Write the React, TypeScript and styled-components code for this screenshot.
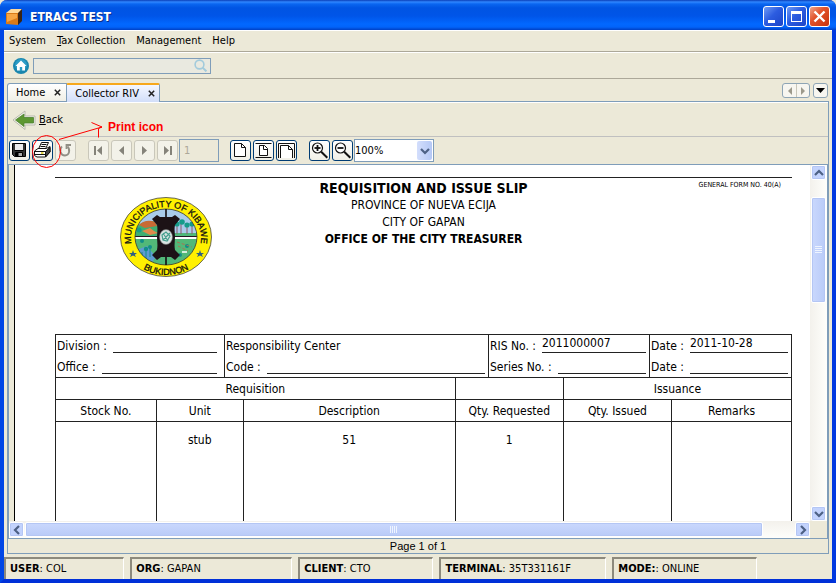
import React from "react";
import styled, { createGlobalStyle, css } from "styled-components";

const UI = '"DejaVu Sans Condensed", "DejaVu Sans", sans-serif';
const BEIGE = "#ece9d8";
const LINE = "#7f9db9";
const INK = "#222";

const Global = createGlobalStyle`
  * { box-sizing: border-box; }
  html, body { margin: 0; padding: 0; background: ${BEIGE}; }
  body, button, input, select { font-family: ${UI}; font-size: 11px; color: #000; }
  button { padding: 0; margin: 0; }
`;

const Window = styled.div`
  display: flex;
  flex-direction: column;
  height: 100vh;
  min-height: 400px;
  border: solid #0046e6;
  border-width: 0 4px 4px;
  border-color: #0046e6 #0038e0 #0030d8 #0046e6;
  border-radius: 7px 7px 0 0;
  background: ${BEIGE};
`;

const TitleBar = styled.header`
  display: flex;
  align-items: center;
  flex: none;
  gap: 2px;
  height: 30px;
  margin: 0 -4px;
  padding: 3px 6px 0;
  border-radius: 7px 7px 0 0;
  background: linear-gradient(#0a3fb8 0, #2f86ff 2px, #0a66f0 4px, #0054e3 8px, #0055e8 16px, #0268ff 24px, #0264fa 27px, #0040c4 30px);
`;

const AppTitle = styled.h1`
  flex: 1;
  margin: 0 0 0 6px;
  font-size: 12px;
  line-height: 16px;
  font-weight: 700;
  color: #fff;
  text-shadow: 1px 1px 0 #0a2f8a;
`;

const CaptionButton = styled.button<{ $close?: boolean }>`
  display: flex;
  width: 21px;
  height: 21px;
  border: 1px solid #fff;
  border-radius: 3px;
  background: ${(p) =>
    p.$close
      ? "linear-gradient(135deg, #f0a58c, #e2542c 40%, #c8330c)"
      : "linear-gradient(135deg, #6f9bf5, #2c5ce0 45%, #1c45c8)"};
`;

const MenuBar = styled.nav`
  display: flex;
  flex: none;
  align-items: center;
  gap: 11px;
  height: 22px;
  padding: 0 5px;
  border-top: 1px solid #fff;
  border-bottom: 1px solid #aca899;
`;

const MenuItem = styled.button`
  border: 0;
  background: none;
  line-height: 16px;
`;

const QuickBar = styled.div`
  display: flex;
  flex: none;
  align-items: center;
  gap: 4px;
  height: 27px;
  padding: 0 9px;
  border-top: 1px solid #fff;
  border-bottom: 1px solid #aca899;
`;

const PlainButton = styled.button`
  display: flex;
  border: 0;
  background: none;
`;

const SearchBox = styled.label`
  display: flex;
  align-items: center;
  width: 178px;
  height: 16px;
  padding-right: 3px;
  border: 1px solid ${LINE};
  background: #e9e9e0;
`;

const SearchInput = styled.input`
  flex: 1;
  min-width: 0;
  height: 14px;
  padding: 0 3px;
  border: 0;
  background: none;
`;

const TabStrip = styled.div`
  display: flex;
  flex: none;
  align-items: flex-end;
  height: 22px;
  padding: 0 4px 0 3px;
`;

const Tab = styled.div<{ $active?: boolean }>`
  display: flex;
  align-items: center;
  gap: 9px;
  height: 18px;
  padding: 0 5px 0 8px;
  border: 1px solid ${LINE};
  border-bottom: 0;
  border-radius: 3px 0 0 0;
  background: linear-gradient(#fff, #f0efe6);
  ${(p) =>
    p.$active &&
    css`
      height: 19px;
      margin: 0 0 -1px -1px;
      padding: 0 4px 0 8px;
      border-top: 2px solid #f7a81c;
      border-radius: 2px 2px 0 0;
      background: linear-gradient(#f4f7ff, #d2def9);
      position: relative;
      z-index: 1;
    `}
`;

const TabLabel = styled.button`
  border: 0;
  background: none;
  line-height: 14px;
  white-space: nowrap;
`;

const TabTools = styled.div`
  display: flex;
  gap: 3px;
  margin-left: auto;
  padding-bottom: 3px;
`;

const TabToolGroup = styled.div`
  display: flex;
  border: 1px solid #8ea5b5;
  border-radius: 3px;
  background: #f7f6f0;
`;

const TabTool = styled.button`
  display: flex;
  align-items: center;
  justify-content: center;
  width: 13px;
  height: 13px;
  border: 0;
  background: none;
  & + & { border-left: 1px solid #c9c7ba; }
`;

const Panel = styled.main`
  position: relative;
  display: flex;
  flex: 1;
  flex-direction: column;
  min-height: 0;
  margin: 0 3px 3px;
  border: 1px solid ${LINE};
`;

const BackBar = styled.div`
  display: flex;
  flex: none;
  align-items: center;
  height: 35px;
  padding: 0 4px;
  border-top: 1px solid #fff;
  border-bottom: 1px solid #c0c0c0;
`;

const BackButton = styled(PlainButton)`
  align-items: center;
  gap: 2px;
  line-height: 16px;
`;

const ReportBar = styled.div`
  display: flex;
  flex: none;
  align-items: center;
  height: 27px;
  padding: 0 1px;
`;

const ToolGroup = styled.div<{ $after?: number }>`
  display: flex;
  align-items: center;
  gap: 2px;
  margin-right: ${(p) => p.$after ?? 0}px;
`;

const ToolButton = styled.button`
  display: flex;
  align-items: center;
  justify-content: center;
  width: 21px;
  height: 21px;
  border: 1px solid #003c74;
  border-radius: 3px;
  background: linear-gradient(#fff, #f0efe6);
  &:disabled {
    border-color: #c9c7ba;
    background: #f3f2e9;
  }
`;

const PageInput = styled.input`
  width: 40px;
  height: 23px;
  padding: 0 4px;
  border: 1px solid ${LINE};
  background: ${BEIGE};
  &:disabled { color: #aca899; }
`;

const ZoomBox = styled.div`
  display: flex;
  align-items: center;
  width: 80px;
  height: 23px;
  margin-left: -1px;
  padding-right: 1px;
  border: 1px solid ${LINE};
  background: #fff;
`;

const ZoomSelect = styled.select`
  flex: 1;
  min-width: 0;
  height: 20px;
  padding: 0;
  border: 0;
  background: none;
  appearance: none;
`;

const Arrow = styled.span`
  display: flex;
  align-items: center;
  justify-content: center;
  width: 15px;
  height: 19px;
  border-radius: 2px;
  background: linear-gradient(90deg, #d3defc, #b5c8f5);
  pointer-events: none;
`;

const ScrollPane = styled.section`
  display: grid;
  flex: 1;
  grid-template: minmax(0, 1fr) 17px / minmax(0, 1fr) 17px;
  min-height: 0;
  border: 1px solid ${LINE};
`;

const Viewport = styled.div`
  min-width: 0;
  overflow: hidden;
  padding-left: 5px;
`;

const Sheet = styled.article`
  height: 100%;
  padding: 12px 18px 0 40px;
  border-left: 1px solid #000;
  background: #fff;
  font-size: 12px;
  overflow: hidden;
`;

const SheetHead = styled.header`
  display: grid;
  grid-template-columns: 1fr auto 1fr;
  align-items: start;
  height: 157px;
  border-top: 1px solid ${INK};
`;

const SealBox = styled.div`
  padding: 19px 0 0 65px;
`;

const Heading = styled.div`
  padding-top: 2px;
  text-align: center;
  line-height: 17px;
`;

const SlipTitle = styled.h2`
  margin: 0;
  font-size: 14px;
  line-height: 17px;
`;

const Strong = styled.strong`
  display: block;
`;

const Centered = styled.div`
  line-height: 17px;
`;

const FormNo = styled.small`
  padding: 2px 11px 0 0;
  font-size: 7px;
  line-height: 10px;
  text-align: right;
`;

const InfoGrid = styled.div`
  display: grid;
  grid-template-columns: 168fr 264fr 161fr 142fr;
  border: 1px solid ${INK};
  border-bottom: 0;
`;

const InfoCell = styled.div`
  min-width: 0;
  padding: 0 3px 0 1px;
  & + & { border-left: 1px solid ${INK}; }
  &:first-child { padding-right: 7px; }
`;

const Field = styled.div`
  display: flex;
  gap: 6px;
  height: 21px;
  line-height: 22px;
  white-space: nowrap;
`;

const Blank = styled.span`
  flex: 1;
  height: 18px;
  line-height: 16px;
  border-bottom: 1px solid ${INK};
`;

const Table = styled.table`
  width: 100%;
  table-layout: fixed;
  border-collapse: collapse;
`;

const Col = styled.col<{ $w: number }>`
  width: ${(p) => p.$w}%;
`;

const Th = styled.th`
  height: 22px;
  padding: 0;
  border: 1px solid ${INK};
  font-weight: 400;
  line-height: 16px;
`;

const Td = styled.td`
  height: 900px;
  padding: 10px 0 0;
  border: 1px solid ${INK};
  text-align: center;
  vertical-align: top;
  line-height: 16px;
`;

const ScrollTrack = styled.div<{ $v?: boolean }>`
  display: flex;
  flex-direction: ${(p) => (p.$v ? "column" : "row")};
  padding: ${(p) => (p.$v ? "0 1px" : "1px 0")};
  background: linear-gradient(${(p) => (p.$v ? "90deg" : "180deg")}, #f3f1ec, #fefefb);
`;

const scrollFace = css`
  display: flex;
  align-items: center;
  justify-content: center;
  border: 1px solid #fff;
  border-radius: 2px;
  box-shadow: 0 0 0 1px #b4c6f4 inset;
`;

const ScrollButton = styled.button`
  ${scrollFace}
  flex: none;
  width: 15px;
  height: 15px;
  background: #c3d3fd;
`;

const ScrollGap = styled.div<{ $size: number }>`
  flex: ${(p) => p.$size} 1 0;
`;

const Thumb = styled.div<{ $size: number; $v?: boolean }>`
  ${scrollFace}
  flex: ${(p) => p.$size} 1 0;
  background: linear-gradient(${(p) => (p.$v ? "90deg" : "180deg")}, #cad8fd, #b9cbf8);
`;

const PageStatus = styled.footer`
  flex: none;
  height: 14px;
  font-family: "Liberation Sans", Arial, sans-serif;
  font-size: 11px;
  line-height: 15px;
  text-align: center;
`;

const StatusBar = styled.footer`
  display: flex;
  flex: none;
  gap: 6px;
  height: 22px;
`;

const StatusCell = styled.div<{ $size: number }>`
  flex: ${(p) => p.$size} 1 0;
  min-width: 0;
  padding-left: 4px;
  border: solid #fff;
  border-width: 2px 1px 0 2px;
  border-top-color: #8d8a7d;
  border-left-color: #8d8a7d;
  line-height: 19px;
  white-space: nowrap;
`;

const StatusRest = styled.div`
  flex: 69 1 0;
`;

const Note = styled.div`
  position: absolute;
  top: 19px;
  left: 24px;
  display: flex;
  align-items: flex-start;
  pointer-events: none;
`;

const NoteText = styled.strong`
  margin-left: 4px;
  font: 700 12px/12px "Liberation Sans", Arial, sans-serif;
  color: #f00;
`;

const AppIcon = () => (
  <svg width="16" height="16" viewBox="0 0 16 16" aria-hidden="true">
    <path d="M0 4L5 0H16L12 5H0Z" fill="#ffd99a" />
    <path d="M0 4H12V16L0 15Z" fill="#d97a18" />
    <path d="M12 4L16 0V12L12 16Z" fill="#3a2415" />
    <path d="M1 5H11V9L1 13Z" fill="#f6a544" />
  </svg>
);

const HomeIcon = () => (
  <svg width="16" height="16" viewBox="0 0 16 16" aria-hidden="true">
    <circle cx="8" cy="8" r="8" fill="#1a86ae" />
    <circle cx="8" cy="7" r="6" fill="#2c9cc6" />
    <path d="M8 2.5L2.5 8H4V12.5H6.8V9H9.2V12.5H12V8H13.5Z" fill="#fff" />
  </svg>
);

const CloseX = () => (
  <svg width="7" height="7" viewBox="0 0 7 7" aria-hidden="true">
    <path d="M.8 .8L6.2 6.2M6.2 .8L.8 6.2" stroke="#222" strokeWidth="1.5" />
  </svg>
);

const Triangle = ({ d, w = 5, h = 8, c = "#9d9a8c" }: { d: string; w?: number; h?: number; c?: string }) => (
  <svg width={w} height={h} viewBox={`0 0 ${w} ${h}`} aria-hidden="true">
    <path d={d} fill={c} />
  </svg>
);

const Chevron = ({ d }: { d: string }) => (
  <svg width="10" height="10" viewBox="0 0 10 10" aria-hidden="true">
    <path d={d} fill="none" stroke="#4d6185" strokeWidth="2.2" />
  </svg>
);
const DOWN = "M1 3L5 7L9 3";
const UP = "M1 7L5 3L9 7";
const LEFT = "M7 1L3 5L7 9";
const RIGHT = "M3 1L7 5L3 9";

const Icon = ({ children }: { children: React.ReactNode }) => (
  <svg width="19" height="19" viewBox="0 0 19 19" fill="none" stroke="#111" strokeWidth="1" aria-hidden="true">
    {children}
  </svg>
);

const SaveIcon = () => (
  <Icon>
    <path d="M2.5 2.5H15.5V15.5H4.5L2.5 13.5Z" fill="#333" stroke="#000" />
    <path d="M5 3H13V9H5Z" fill="#ececec" stroke="none" />
    <path d="M4.5 9.5H13.5M5.5 11.5H12.5V15.5H5.5Z" fill="#a9a9a9" stroke="#000" />
    <path d="M6 12H8.5V15.5H6Z" fill="#000" stroke="none" />
  </Icon>
);

const PrintIcon = () => (
  <Icon>
    <path d="M5.5 8L8.5 1.5H15.5L12.5 8" fill="#fff" />
    <path d="M8.5 3.5H13.5M7.5 5.5H12.5" />
    <path d="M1.5 10L5 7.5H13.5L17 5.5V11L12.5 16H4L1.5 14.5Z" fill="#fff" />
    <path d="M1.5 10.5H12.5L17 6.5M1.5 13.5H12.5M12.5 10.5V16" />
    <path d="M12.5 10.5L17 6.5V11L12.5 16Z" fill="#444" />
    <path d="M8 12H10.5" stroke="#d8c600" strokeWidth="1.4" />
  </Icon>
);

const ReloadIcon = () => (
  <Icon>
    <path d="M6 5.5C2.5 8.5 4.5 14.5 9 14.5S14.5 8.5 11.5 5.5" stroke="#918f85" strokeWidth="1.8" />
    <path d="M10.5 8V4H15" stroke="#918f85" strokeWidth="1.8" />
  </Icon>
);

const NavIcon = ({ d }: { d: string }) => (
  <Icon>
    <path d={d} fill="#85837a" stroke="none" />
  </Icon>
);

const PageIcon = () => (
  <Icon>
    <path d="M3.5 2.5H10.5L14.5 6.5V15.5H3.5Z" fill="#fff" />
    <path d="M10.5 2.5V6.5H14.5" />
  </Icon>
);
const FitPageIcon = () => (
  <Icon>
    <path d="M1.5 2.5H17.5M1.5 16.5H17.5" />
    <path d="M5.5 4.5H10.5L13.5 7.5V14.5H5.5Z" fill="#fff" />
    <path d="M9.5 4.5V8.5H13.5" />
  </Icon>
);
const FitWidthIcon = () => (
  <Icon>
    <path d="M1.5 17V2.5H17.5V17" />
    <path d="M3.5 17V4.5H11.5L15.5 8.5V17" fill="#fff" />
    <path d="M11.5 4.5V8.5H15.5" />
  </Icon>
);
const Magnifier = ({ plus }: { plus?: boolean }) => (
  <Icon>
    <circle cx="7.5" cy="7" r="5" fill="#fff" strokeWidth="1.2" />
    <path d="M4.5 7H10.5" strokeWidth="1.8" />
    {plus && <path d="M7.5 4V10" strokeWidth="1.8" />}
    <path d="M11.2 10.7L17.3 16.8" strokeWidth="2" />
  </Icon>
);

const Seal = () => (
  <svg width="92" height="80" viewBox="0 0 92 80" role="img" aria-label="Municipality of Kibawe seal">
    <defs>
      <path id="sealTop" d="M16 57A35 31 0 1 1 76 57" />
      <path id="sealBottom" d="M6 44A40 34 0 0 0 86 44" />
      <clipPath id="sealInner">
        <ellipse cx="46" cy="40" rx="31" ry="28" />
      </clipPath>
    </defs>
    <ellipse cx="46" cy="40" rx="45.5" ry="39.5" fill="#fff000" stroke="#444" strokeWidth=".8" />
    <g clipPath="url(#sealInner)">
      <path d="M0 0H92V39H0Z" fill="#a9cbea" />
      <path d="M14 32C20 26 24 24 34 24L40 32V39H14Z" fill="#3fae72" />
      <path d="M19 28C24 23 30 23 35 25L37 29L25 31Z" fill="#c96a35" />
      <path d="M22 34L30 31L34 34L38 36L30 38Z" fill="#e08a4a" />
      <path d="M54 36H80V39H54Z" fill="#4fb87a" />
      <path d="M57 28V37M61 27V37M67 29V37M72 28V37" stroke="#8c5a6a" />
      <g fill="#169c8a">
        <circle cx="57" cy="27" r="2.6" />
        <circle cx="62" cy="25" r="2.8" />
        <circle cx="67" cy="28" r="2.6" />
        <circle cx="72" cy="27" r="2.6" />
        <circle cx="19" cy="33" r="2.5" />
      </g>
      <path d="M0 39H92V42H0Z" fill="#fff" />
      <path d="M0 39.5H92" stroke="#221520" />
      <path d="M0 42H92V80H0Z" fill="#52b878" />
      <path d="M14 54L27 49L36 60L30 68Z" fill="#5e9bd0" />
      <g fill="#128e88">
        <circle cx="22" cy="44" r="2" />
        <circle cx="26" cy="52" r="2.2" />
        <circle cx="30" cy="50" r="2" />
        <circle cx="60" cy="58" r="2" />
        <circle cx="67" cy="49" r="2" />
      </g>
      <path d="M26 52V61M30 50V60M22 55V60" stroke="#128e88" />
      <path d="M57 45L72 50M58 49L68 54" stroke="#a87352" strokeDasharray="3 2" />
      <path d="M62 55H67" stroke="#fff" strokeWidth="1.5" />
    </g>
    <ellipse cx="46" cy="40" rx="31" ry="28" fill="none" stroke="#333" strokeWidth=".8" />
    <path d="M46 12V68" stroke="#120c10" strokeWidth="1.6" />
    <path
      d="M37 18L40 20H52L55 18L60 22L55 28C54 33 55 36 55 40S54 48 55 53L60 58L55 63L51 60H41L37 63L32 58L37 53C38 48 37 44 37 40S38 33 37 28L32 22Z"
      fill="#1c1216"
    />
    <ellipse cx="46" cy="40" rx="6.5" ry="7.5" fill="#d9e4e2" stroke="#666" strokeWidth=".6" />
    <path d="M42 38L46 35L50 39L47 44L43 43ZM43 36L48 44M50 36L43 43" fill="none" stroke="#46a08e" strokeWidth="1.2" />
    <g fill="#2d5f83">
      <path d="M13 53L14 56L17 56L14.8 57.8L16 60L13 58.6L10 60L11.2 57.8L9 56H12Z" />
      <path d="M80 53L81 56L84 56L81.8 57.8L83 60L80 58.6L77 60L78.2 57.8L76 56H79Z" />
    </g>
    <g fontFamily="Liberation Sans, Arial, sans-serif" fontSize="9" fill="#111" stroke="#111" strokeWidth=".3" textAnchor="middle">
      <text>
        <textPath href="#sealTop" startOffset="50%">MUNICIPALITY OF KIBAWE</textPath>
      </text>
      <text>
        <textPath href="#sealBottom" startOffset="50%">BUKIDNON</textPath>
      </text>
    </g>
  </svg>
);

const Tool = ({ label, disabled, children }: { label: string; disabled?: boolean; children: React.ReactNode }) => (
  <ToolButton type="button" aria-label={label} title={label} disabled={disabled}>
    {children}
  </ToolButton>
);

const COLUMNS = [13.7, 11.8, 28.8, 14.7, 14.7, 16.3];
const HEADERS = ["Stock No.", "Unit", "Description", "Qty. Requested", "Qty. Issued", "Remarks"];
const ROW = ["", "stub", "51", "1", "", ""];
const STATUS = [
  { name: "USER", value: "COL", size: 114 },
  { name: "ORG", value: "GAPAN", size: 156 },
  { name: "CLIENT", value: "CTO", size: 129 },
  { name: "TERMINAL", value: "35T331161F", size: 161 },
  { name: "MODE:", value: "ONLINE", size: 139 },
];

export default function App() {
  return (
    <Window>
      <Global />
      <TitleBar>
        <AppIcon />
        <AppTitle>ETRACS TEST</AppTitle>
        <CaptionButton type="button" aria-label="Minimize">
          <svg width="19" height="19"><path d="M4 13H11V16H4Z" fill="#fff" /></svg>
        </CaptionButton>
        <CaptionButton type="button" aria-label="Maximize">
          <svg width="19" height="19"><path d="M4 4H15V15H4ZM5 7V14H14V7Z" fill="#fff" fillRule="evenodd" /></svg>
        </CaptionButton>
        <CaptionButton type="button" aria-label="Close" $close>
          <svg width="19" height="19"><path d="M4.5 4.5L14.5 14.5M14.5 4.5L4.5 14.5" stroke="#fff" strokeWidth="2.4" /></svg>
        </CaptionButton>
      </TitleBar>

      <MenuBar>
        <MenuItem type="button">System</MenuItem>
        <MenuItem type="button"><u>T</u>ax Collection</MenuItem>
        <MenuItem type="button">Management</MenuItem>
        <MenuItem type="button">Help</MenuItem>
      </MenuBar>

      <QuickBar>
        <PlainButton type="button" aria-label="Home page"><HomeIcon /></PlainButton>
        <SearchBox>
          <SearchInput type="text" aria-label="Search" />
          <svg width="13" height="13" viewBox="0 0 13 13" fill="none" stroke="#a3cbdc" strokeWidth="1.6" aria-hidden="true">
            <circle cx="5.5" cy="5.5" r="4.4" />
            <path d="M8.6 8.6L12.4 12.4" strokeWidth="2" />
          </svg>
        </SearchBox>
      </QuickBar>

      <TabStrip>
        <Tab>
          <TabLabel type="button">Home</TabLabel>
          <PlainButton type="button" aria-label="Close Home"><CloseX /></PlainButton>
        </Tab>
        <Tab $active>
          <TabLabel type="button">Collector RIV</TabLabel>
          <PlainButton type="button" aria-label="Close Collector RIV"><CloseX /></PlainButton>
        </Tab>
        <TabTools>
          <TabToolGroup>
            <TabTool type="button" aria-label="Previous tab"><Triangle d="M5 0V8L1 4Z" /></TabTool>
            <TabTool type="button" aria-label="Next tab"><Triangle d="M0 0V8L4 4Z" /></TabTool>
          </TabToolGroup>
          <TabToolGroup>
            <TabTool type="button" aria-label="List tabs"><Triangle d="M0 0H9L4.5 5Z" w={9} h={5} c="#000" /></TabTool>
          </TabToolGroup>
        </TabTools>
      </TabStrip>

      <Panel>
        <BackBar>
          <BackButton type="button">
            <svg width="25" height="20" viewBox="0 0 25 20" aria-hidden="true">
              <path d="M1 10L13 1V6H23V15H13V19.5Z" fill="#f5f5ef" stroke="#b9b9ad" />
              <path d="M3.5 10L12 4V7.5H21.5V13H12V16.5Z" fill="#5d9732" stroke="#4c8030" strokeWidth=".8" />
            </svg>
            <span><u>B</u>ack</span>
          </BackButton>
        </BackBar>

        <ReportBar>
          <ToolGroup $after={12}>
            <Tool label="Save"><SaveIcon /></Tool>
            <Tool label="Print"><PrintIcon /></Tool>
            <Tool label="Reload" disabled><ReloadIcon /></Tool>
          </ToolGroup>
          <ToolGroup $after={1}>
            <Tool label="First page" disabled><NavIcon d="M5 5H7V14H5ZM13 5V14L8 9.5Z" /></Tool>
            <Tool label="Previous page" disabled><NavIcon d="M12 5V14L7 9.5Z" /></Tool>
            <Tool label="Next page" disabled><NavIcon d="M7 5V14L12 9.5Z" /></Tool>
            <Tool label="Last page" disabled><NavIcon d="M6 5V14L11 9.5ZM12 5H14V14H12Z" /></Tool>
          </ToolGroup>
          <ToolGroup $after={11}>
            <PageInput type="text" aria-label="Page number" defaultValue="1" disabled />
          </ToolGroup>
          <ToolGroup $after={12}>
            <Tool label="Actual size"><PageIcon /></Tool>
            <Tool label="Fit page"><FitPageIcon /></Tool>
            <Tool label="Fit width"><FitWidthIcon /></Tool>
          </ToolGroup>
          <ToolGroup>
            <Tool label="Zoom in"><Magnifier plus /></Tool>
            <Tool label="Zoom out"><Magnifier /></Tool>
            <ZoomBox>
              <ZoomSelect aria-label="Zoom ratio" defaultValue="100%">
                <option>50%</option>
                <option>100%</option>
                <option>200%</option>
              </ZoomSelect>
              <Arrow><Chevron d={DOWN} /></Arrow>
            </ZoomBox>
          </ToolGroup>
        </ReportBar>

        <ScrollPane>
          <Viewport>
            <Sheet>
              <SheetHead>
                <SealBox><Seal /></SealBox>
                <Heading>
                  <SlipTitle>REQUISITION AND ISSUE SLIP</SlipTitle>
                  <Centered>PROVINCE OF NUEVA ECIJA</Centered>
                  <Centered>CITY OF GAPAN</Centered>
                  <Strong>OFFICE OF THE CITY TREASURER</Strong>
                </Heading>
                <FormNo>GENERAL FORM NO. 40(A)</FormNo>
              </SheetHead>
              <InfoGrid>
                <InfoCell>
                  <Field>Division : <Blank /></Field>
                  <Field>Office : <Blank /></Field>
                </InfoCell>
                <InfoCell>
                  <Field>Responsibility Center</Field>
                  <Field>Code : <Blank /></Field>
                </InfoCell>
                <InfoCell>
                  <Field>RIS No. : <Blank>2011000007</Blank></Field>
                  <Field>Series No. : <Blank /></Field>
                </InfoCell>
                <InfoCell>
                  <Field>Date : <Blank>2011-10-28</Blank></Field>
                  <Field>Date : <Blank /></Field>
                </InfoCell>
              </InfoGrid>
              <Table>
                <colgroup>
                  {COLUMNS.map((w, i) => <Col key={i} $w={w} />)}
                </colgroup>
                <thead>
                  <tr>
                    <Th colSpan={3}>Requisition</Th>
                    <Th />
                    <Th colSpan={2}>Issuance</Th>
                  </tr>
                  <tr>
                    {HEADERS.map((h) => <Th key={h} scope="col">{h}</Th>)}
                  </tr>
                </thead>
                <tbody>
                  <tr>
                    {ROW.map((v, i) => <Td key={i}>{v}</Td>)}
                  </tr>
                </tbody>
              </Table>
            </Sheet>
          </Viewport>
          <ScrollTrack $v>
            <ScrollButton type="button" aria-label="Scroll up"><Chevron d={UP} /></ScrollButton>
            <ScrollGap $size={17} />
            <Thumb $size={104} $v>
              <svg width="7" height="8" aria-hidden="true"><path d="M0 .5H7M0 2.5H7M0 4.5H7M0 6.5H7" stroke="#eef4ff" /></svg>
            </Thumb>
            <ScrollGap $size={202} />
            <ScrollButton type="button" aria-label="Scroll down"><Chevron d={DOWN} /></ScrollButton>
          </ScrollTrack>
          <ScrollTrack>
            <ScrollButton type="button" aria-label="Scroll left"><Chevron d={LEFT} /></ScrollButton>
            <ScrollGap $size={1} />
            <Thumb $size={736}>
              <svg width="8" height="7" aria-hidden="true"><path d="M.5 0V7M2.5 0V7M4.5 0V7M6.5 0V7" stroke="#eef4ff" /></svg>
            </Thumb>
            <ScrollGap $size={32} />
            <ScrollButton type="button" aria-label="Scroll right"><Chevron d={RIGHT} /></ScrollButton>
          </ScrollTrack>
        </ScrollPane>
        <PageStatus>Page 1 of 1</PageStatus>

        <Note>
          <svg width="72" height="48" viewBox="0 0 72 48" fill="none" stroke="#f00" aria-hidden="true">
            <ellipse cx="14.5" cy="30.5" rx="14" ry="16" />
            <path d="M27 18.5L70 6L59.5 1.5M70 6L66.5 7.5V16.5" />
          </svg>
          <NoteText>Print icon</NoteText>
        </Note>
      </Panel>

      <StatusBar>
        {STATUS.map((s) => (
          <StatusCell key={s.name} $size={s.size}>
            <b>{s.name}</b>: {s.value}
          </StatusCell>
        ))}
        <StatusRest />
      </StatusBar>
    </Window>
  );
}
